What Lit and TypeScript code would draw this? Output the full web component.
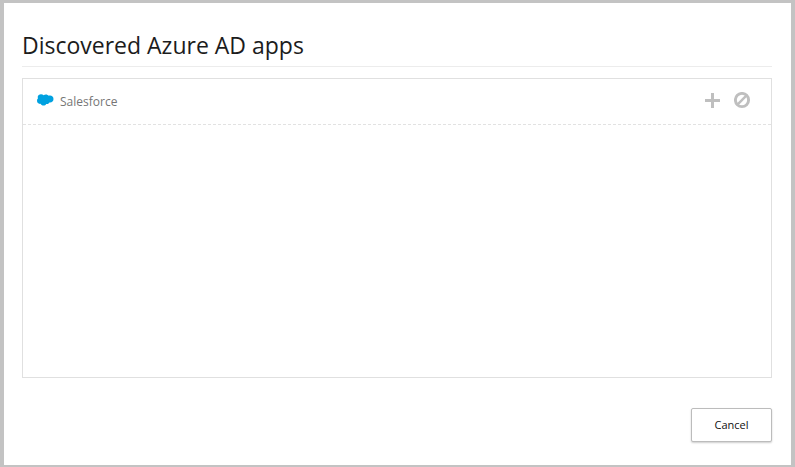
import { LitElement, html, css } from "lit";
import { customElement, property } from "lit/decorators.js";

@customElement("app-row")
class AppRow extends LitElement {
  @property() name = "";

  static styles = css`
    :host {
      display: flex;
      align-items: center;
      height: 45px;
      padding: 0 20px 0 14px;
      border-bottom: 1px dashed #e2e2e2;
    }
    .logo {
      width: 17px;
      height: 12px;
      margin: 0 6px 4px 0;
      flex: none;
    }
    .name {
      flex: 1;
      font-size: 12px;
      line-height: 18px;
      color: #767676;
    }
    .actions {
      display: flex;
      gap: 13px;
      margin-bottom: 2px;
    }
    .action {
      display: flex;
      padding: 0;
      border: 0;
      background: none;
      color: #bfbfbf;
      cursor: pointer;
    }
  `;

  render() {
    return html`
      <svg class="logo" viewBox="0 0 17 12" aria-hidden="true">
        <path
          fill="#00a1e0"
          d="M6.600 1.200C7.200.700 8 .500 8.900.500c1.200 0 2.200.600 2.800 1.300.400-.100.900-.200 1.400-.200 1.900 0 3.400 1.400 3.400 3.400s-1.500 3.600-3.400 3.600c-.200 0-.500 0-.700-.100-.400.900-1.200 1.500-2.100 1.500-.400 0-.800-.100-1.100-.100-.500 1.100-1.500 1.700-2.700 1.700-1.300 0-2.500-.800-2.900-1.800-.200 0-.400.100-.600.100C1.300 9.900 0 8.400 0 6.800c0-1.100.300-2 1-2.600C.800 3.800.700 3.400.700 3 .700 1.400 2.300.200 4 .200c1.100 0 2 .400 2.600 1z"
        />
      </svg>
      <span class="name">${this.name}</span>
      <div class="actions">
        <button class="action" aria-label="Add ${this.name}">
          <svg width="17" height="17" viewBox="0 0 17 17" aria-hidden="true">
            <path d="M8.500 2.500v12M2.500 8.500h12" fill="none" stroke="currentColor" stroke-width="3" stroke-linecap="square" stroke-linejoin="round" />
          </svg>
        </button>
        <button class="action" aria-label="Ignore ${this.name}">
          <svg width="17" height="17" viewBox="0 0 17 17" aria-hidden="true">
            <g fill="none" stroke="currentColor">
              <circle cx="8" cy="8" r="6.600" stroke-width="2.900" />
              <path d="M3.700 12.300l8.600-8.600" stroke-width="2.400" />
            </g>
          </svg>
        </button>
      </div>
    `;
  }
}

@customElement("app-root")
class AppRoot extends LitElement {
  private apps = ["Salesforce"];

  static styles = css`
    :host {
      display: block;
      box-sizing: border-box;
      min-height: 100vh;
      padding: 3px 4px 2px;
      background: #c3c3c3;
      font-family: "Open Sans", "Noto Sans", sans-serif;
    }
    .dialog {
      box-sizing: border-box;
      min-height: calc(100vh - 5px);
      padding: 26px 19px 23px 18px;
      background: #fff;
    }
    .title {
      margin: 0 0 11px;
      padding-bottom: 5px;
      border-bottom: 1px solid #ececec;
      font-size: 23px;
      font-weight: 400;
      line-height: 32px;
      color: #1c1c1c;
    }
    .list {
      min-height: 298px;
      border: 1px solid #e0e0e0;
    }
    .footer {
      display: flex;
      justify-content: flex-end;
      margin-top: 30px;
    }
    .cancel {
      min-width: 81px;
      height: 34px;
      padding: 0 16px;
      border: 1px solid #bcbcbc;
      border-radius: 2px;
      background: #fff;
      box-shadow: 0 1px 2px rgba(0, 0, 0, 0.2);
      font: 11px/16px "Open Sans", "Noto Sans", sans-serif;
      color: #111;
      cursor: pointer;
    }
  `;

  render() {
    return html`
      <section class="dialog" role="dialog" aria-labelledby="title">
        <h1 class="title" id="title">Discovered Azure AD apps</h1>
        <div class="list">
          ${this.apps.map((name) => html`<app-row .name=${name}></app-row>`)}
        </div>
        <div class="footer">
          <button class="cancel">Cancel</button>
        </div>
      </section>
    `;
  }
}
